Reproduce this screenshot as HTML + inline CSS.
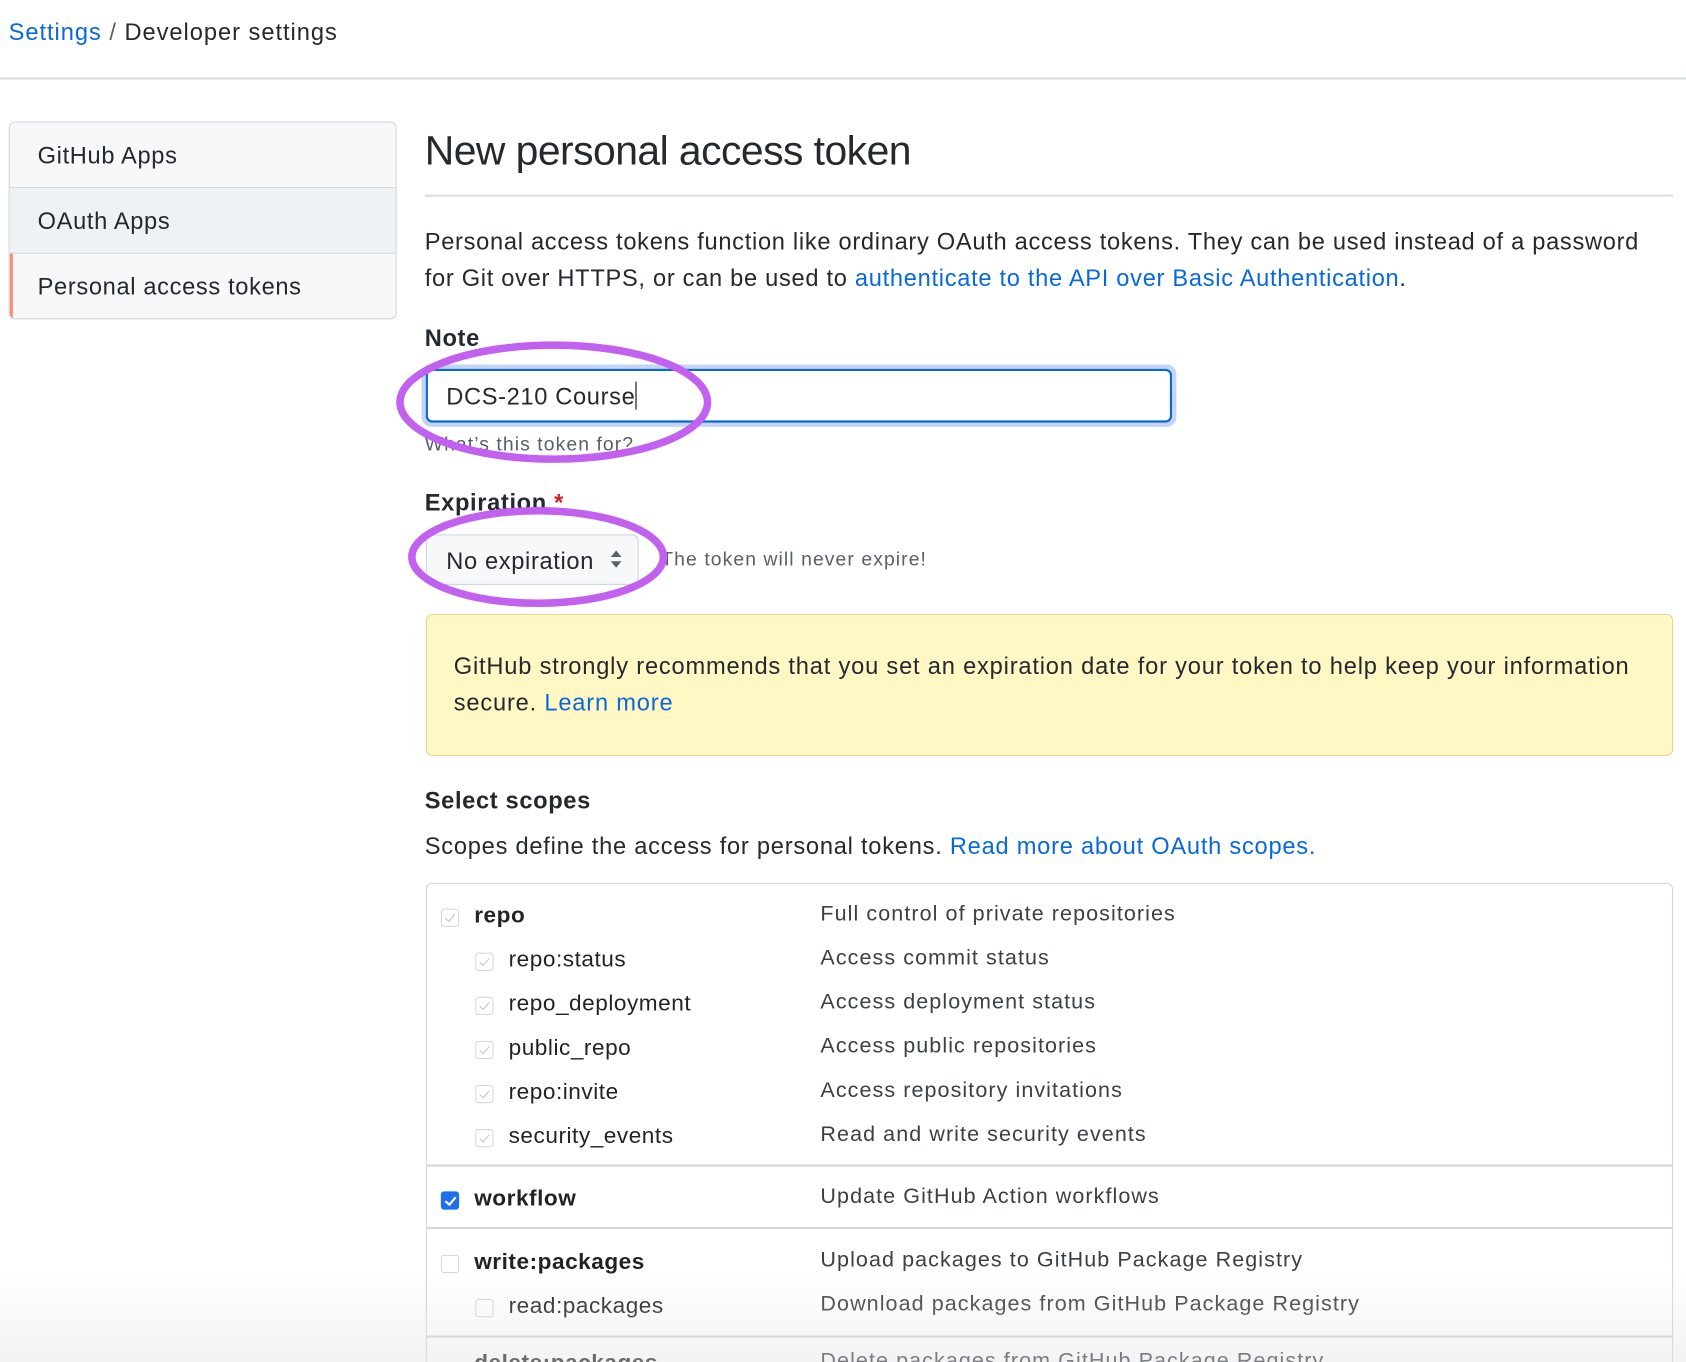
<!DOCTYPE html>
<html><head><meta charset="utf-8">
<style>
html,body{margin:0;padding:0;background:#fff;overflow:hidden;}
body{width:1686px;height:1362px;overflow:hidden;position:relative;font-family:"Liberation Sans",Arial,sans-serif;color:#24292f;}
#w{position:absolute;left:0;top:0;width:1568px;height:1267px;transform:scale(1.07526);transform-origin:0 0;overflow:hidden;}
.a{position:absolute;white-space:nowrap;}
a{color:#0969da;text-decoration:none;}
.t22{font-size:22px;letter-spacing:0.6px;}
.cb{position:absolute;width:17px;height:17px;border:1px solid #d3d8dd;border-radius:3px;background:#fff;box-sizing:border-box;}
.cb.c::after{content:"";position:absolute;left:5px;top:2px;width:4px;height:8px;border:solid #bfc4c9;border-width:0 1.5px 1.5px 0;transform:rotate(40deg);}
.cb.on{background:#1f6feb;border-color:#1f6feb;}
.cb.on::after{content:"";position:absolute;left:5px;top:2px;width:4px;height:8px;border:solid #fff;border-width:0 2px 2px 0;transform:rotate(40deg);}
.desc{font-size:20px;color:#3a4047;letter-spacing:1px;}
.nm{font-size:21px;color:#1f2328;letter-spacing:0.5px;}
</style></head><body><div id="w">
<div class="a" style="left:8px;top:17px;font-size:22px;letter-spacing:0.9px;"><a>Settings</a> <span style="color:#57606a">/</span> Developer settings</div>
<div class="a" style="left:0;top:72px;width:1568px;height:2px;background:#d8dee4;"></div>

<div class="a" style="left:8px;top:113px;width:359px;height:182px;border:1px solid #d0d7de;border-radius:6px;background:#f6f8fa;overflow:hidden;">
 <div style="height:60px;border-bottom:1px solid #d0d7de;position:relative;"><span class="a t22" style="left:26px;top:18px;">GitHub Apps</span></div>
 <div style="height:60px;border-bottom:1px solid #d0d7de;position:relative;background:#eff2f5;"><span class="a t22" style="left:26px;top:18px;">OAuth Apps</span></div>
 <div style="height:60px;position:relative;border-left:3px solid #fd8c73;"><span class="a t22" style="left:23px;top:18px;">Personal access tokens</span></div>
</div>

<div class="a" style="left:395px;top:120px;font-size:38px;letter-spacing:-0.5px;">New personal access token</div>
<div class="a" style="left:395px;top:181px;width:1161px;height:2px;background:#d8dee4;"></div>
<div class="a t22" style="left:395px;top:208px;line-height:34px;letter-spacing:0.65px;">Personal access tokens function like ordinary OAuth access tokens. They can be used instead of a password<br>for Git over HTTPS, or can be used to <a>authenticate to the API over Basic Authentication</a>.</div>

<div class="a t22" style="left:395px;top:302px;font-weight:bold;">Note</div>
<div class="a" style="left:392px;top:339px;width:702px;height:58px;border-radius:9px;background:#c3d4f5;"></div>
<div class="a" style="left:396px;top:343px;width:694px;height:50px;border:2px solid #0969da;border-radius:6px;background:#fff;box-sizing:border-box;"></div>
<div class="a t22" style="left:415px;top:355px;">DCS-210 Course<span style="display:inline-block;width:1.5px;height:26px;background:#000;vertical-align:-5px;"></span></div>
<div class="a" style="left:395px;top:403px;font-size:18px;color:#57606a;letter-spacing:1px;">What’s this token for?</div>

<div class="a t22" style="left:395px;top:455px;font-weight:bold;">Expiration <span style="color:#cf222e">*</span></div>
<div class="a" style="left:396px;top:497px;width:198px;height:47px;border:1px solid #d0d7de;border-radius:6px;background:#f6f8fa;box-sizing:border-box;"></div>
<div class="a t22" style="left:415px;top:509px;">No expiration</div>
<svg class="a" style="left:567px;top:510px" width="12" height="20" viewBox="0 0 12 20"><path d="M1 8 L6 2 L11 8Z M1 12 L6 18 L11 12Z" fill="#57606a"/></svg>
<div class="a" style="left:615px;top:510px;font-size:18px;color:#57606a;letter-spacing:1px;">The token will never expire!</div>

<svg class="a" style="left:0;top:0" width="1568" height="700"><ellipse cx="515" cy="374" rx="143" ry="53" fill="none" stroke="#c260f0" stroke-width="7"/><ellipse cx="500" cy="518" rx="117" ry="43" fill="none" stroke="#c260f0" stroke-width="7"/></svg>

<div class="a" style="left:396px;top:571px;width:1160px;height:132px;background:#fff8c5;border:1px solid #e8d48a;border-radius:6px;box-sizing:border-box;"></div>
<div class="a t22" style="left:422px;top:603px;line-height:34px;letter-spacing:0.75px;">GitHub strongly recommends that you set an expiration date for your token to help keep your information<br>secure. <a>Learn more</a></div>

<div class="a t22" style="left:395px;top:732px;font-weight:bold;">Select scopes</div>
<div class="a t22" style="left:395px;top:774px;letter-spacing:0.7px;">Scopes define the access for personal tokens. <a>Read more about OAuth scopes.</a></div>

<div class="a" style="left:396px;top:821px;width:1160px;height:460px;border:1.5px solid #d0d7de;border-radius:6px;box-sizing:border-box;"></div>
<div class="a" style="left:396px;top:1083px;width:1160px;height:2px;background:#d0d7de;"></div>
<div class="a" style="left:396px;top:1141px;width:1160px;height:2px;background:#d0d7de;"></div>
<div class="a" style="left:396px;top:1242px;width:1160px;height:2px;background:#d0d7de;"></div>

<div class="cb c" style="left:410px;top:845px;"></div><div class="a nm" style="left:441px;top:840px;font-weight:bold;">repo</div><div class="a desc" style="left:763px;top:839px;">Full control of private repositories</div>
<div class="cb c" style="left:442px;top:886px;"></div><div class="a nm" style="left:473px;top:881px;">repo:status</div><div class="a desc" style="left:763px;top:880px;">Access commit status</div>
<div class="cb c" style="left:442px;top:927px;"></div><div class="a nm" style="left:473px;top:922px;">repo_deployment</div><div class="a desc" style="left:763px;top:921px;">Access deployment status</div>
<div class="cb c" style="left:442px;top:968px;"></div><div class="a nm" style="left:473px;top:963px;">public_repo</div><div class="a desc" style="left:763px;top:962px;">Access public repositories</div>
<div class="cb c" style="left:442px;top:1009px;"></div><div class="a nm" style="left:473px;top:1004px;">repo:invite</div><div class="a desc" style="left:763px;top:1003px;">Access repository invitations</div>
<div class="cb c" style="left:442px;top:1050px;"></div><div class="a nm" style="left:473px;top:1045px;">security_events</div><div class="a desc" style="left:763px;top:1044px;">Read and write security events</div>
<div class="cb on" style="left:410px;top:1108px;"></div><div class="a nm" style="left:441px;top:1103px;font-weight:bold;">workflow</div><div class="a desc" style="left:763px;top:1102px;">Update GitHub Action workflows</div>
<div class="cb" style="left:410px;top:1167px;"></div><div class="a nm" style="left:441px;top:1162px;font-weight:bold;">write:packages</div><div class="a desc" style="left:763px;top:1161px;">Upload packages to GitHub Package Registry</div>
<div class="cb" style="left:442px;top:1208px;"></div><div class="a nm" style="left:473px;top:1203px;">read:packages</div><div class="a desc" style="left:763px;top:1202px;">Download packages from GitHub Package Registry</div>
<div class="a nm" style="left:441px;top:1256px;font-weight:bold;">delete:packages</div><div class="a desc" style="left:763px;top:1255px;">Delete packages from GitHub Package Registry</div>

<div class="a" style="left:0;top:1180px;width:1568px;height:87px;background:linear-gradient(to bottom,rgba(230,230,230,0),rgba(225,225,225,0.4));"></div>
</div></body></html>
